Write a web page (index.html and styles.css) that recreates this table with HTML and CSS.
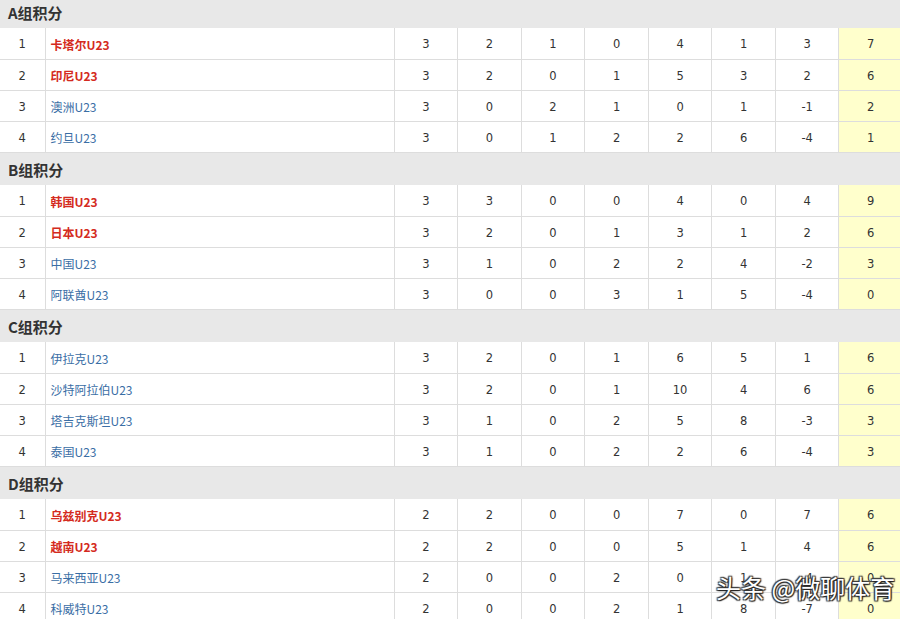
FILE: index.html
```html
<!DOCTYPE html>
<html lang="zh">
<head>
<meta charset="utf-8">
<link rel="stylesheet" href="styles.css">
</head>
<body>
<div class="page">
  <section class="group first">
    <div class="group-title">A组积分</div>
    <table class="standings">
      <colgroup><col class="c-rank"><col class="c-team"><col class="c-n"><col class="c-n"><col class="c-n"><col class="c-n"><col class="c-n"><col class="c-n"><col class="c-n"><col class="c-pts"></colgroup>
      <tr><td>1</td><td class="team top">卡塔尔U23</td><td>3</td><td>2</td><td>1</td><td>0</td><td>4</td><td>1</td><td>3</td><td class="pts">7</td></tr>
      <tr><td>2</td><td class="team top">印尼U23</td><td>3</td><td>2</td><td>0</td><td>1</td><td>5</td><td>3</td><td>2</td><td class="pts">6</td></tr>
      <tr><td>3</td><td class="team">澳洲U23</td><td>3</td><td>0</td><td>2</td><td>1</td><td>0</td><td>1</td><td>-1</td><td class="pts">2</td></tr>
      <tr><td>4</td><td class="team">约旦U23</td><td>3</td><td>0</td><td>1</td><td>2</td><td>2</td><td>6</td><td>-4</td><td class="pts">1</td></tr>
    </table>
  </section>
  <section class="group">
    <div class="group-title">B组积分</div>
    <table class="standings">
      <colgroup><col class="c-rank"><col class="c-team"><col class="c-n"><col class="c-n"><col class="c-n"><col class="c-n"><col class="c-n"><col class="c-n"><col class="c-n"><col class="c-pts"></colgroup>
      <tr><td>1</td><td class="team top">韩国U23</td><td>3</td><td>3</td><td>0</td><td>0</td><td>4</td><td>0</td><td>4</td><td class="pts">9</td></tr>
      <tr><td>2</td><td class="team top">日本U23</td><td>3</td><td>2</td><td>0</td><td>1</td><td>3</td><td>1</td><td>2</td><td class="pts">6</td></tr>
      <tr><td>3</td><td class="team">中国U23</td><td>3</td><td>1</td><td>0</td><td>2</td><td>2</td><td>4</td><td>-2</td><td class="pts">3</td></tr>
      <tr><td>4</td><td class="team">阿联酋U23</td><td>3</td><td>0</td><td>0</td><td>3</td><td>1</td><td>5</td><td>-4</td><td class="pts">0</td></tr>
    </table>
  </section>
  <section class="group">
    <div class="group-title">C组积分</div>
    <table class="standings">
      <colgroup><col class="c-rank"><col class="c-team"><col class="c-n"><col class="c-n"><col class="c-n"><col class="c-n"><col class="c-n"><col class="c-n"><col class="c-n"><col class="c-pts"></colgroup>
      <tr><td>1</td><td class="team">伊拉克U23</td><td>3</td><td>2</td><td>0</td><td>1</td><td>6</td><td>5</td><td>1</td><td class="pts">6</td></tr>
      <tr><td>2</td><td class="team">沙特阿拉伯U23</td><td>3</td><td>2</td><td>0</td><td>1</td><td>10</td><td>4</td><td>6</td><td class="pts">6</td></tr>
      <tr><td>3</td><td class="team">塔吉克斯坦U23</td><td>3</td><td>1</td><td>0</td><td>2</td><td>5</td><td>8</td><td>-3</td><td class="pts">3</td></tr>
      <tr><td>4</td><td class="team">泰国U23</td><td>3</td><td>1</td><td>0</td><td>2</td><td>2</td><td>6</td><td>-4</td><td class="pts">3</td></tr>
    </table>
  </section>
  <section class="group">
    <div class="group-title">D组积分</div>
    <table class="standings">
      <colgroup><col class="c-rank"><col class="c-team"><col class="c-n"><col class="c-n"><col class="c-n"><col class="c-n"><col class="c-n"><col class="c-n"><col class="c-n"><col class="c-pts"></colgroup>
      <tr><td>1</td><td class="team top">乌兹别克U23</td><td>2</td><td>2</td><td>0</td><td>0</td><td>7</td><td>0</td><td>7</td><td class="pts">6</td></tr>
      <tr><td>2</td><td class="team top">越南U23</td><td>2</td><td>2</td><td>0</td><td>0</td><td>5</td><td>1</td><td>4</td><td class="pts">6</td></tr>
      <tr><td>3</td><td class="team">马来西亚U23</td><td>2</td><td>0</td><td>0</td><td>2</td><td>0</td><td>1</td><td>-4</td><td class="pts">0</td></tr>
      <tr><td>4</td><td class="team">科威特U23</td><td>2</td><td>0</td><td>0</td><td>2</td><td>1</td><td>8</td><td>-7</td><td class="pts">0</td></tr>
    </table>
  </section>
</div>
<div class="watermark">头条 @微聊体育</div>
</body>
</html>
```
FILE: styles.css
```css
html, body {
  margin: 0;
  padding: 0;
  background: #ffffff;
  overflow: hidden;
}
body {
  width: 900px;
  height: 619px;
  position: relative;
  font-family: "DejaVu Sans", "Noto Sans CJK SC", sans-serif;
  color: #333333;
}
.page {
  width: 902px;
}
.group.first {
  margin-top: -5px;
}
.group-title {
  height: 33px;
  box-sizing: border-box;
  padding-left: 8px;
  display: flex;
  align-items: center;
  background: #e8e8e8;
  font-family: "Noto Sans CJK SC", sans-serif;
  font-weight: bold;
  font-size: 15px;
  color: #333333;
  border-top: 1px solid #dddddd;
}
.standings {
  width: 902px;
  table-layout: fixed;
  border-collapse: collapse;
}
.c-rank { width: 45px; }
.c-team { width: 349px; }
.c-n { width: 63.5px; }
.c-pts { width: 63px; }
.standings td {
  height: 31px;
  padding: 2px 0 0;
  box-sizing: border-box;
  border-bottom: 1px solid #dddddd;
  border-left: 1px solid #dddddd;
  text-align: center;
  font-size: 11.5px;
  color: #333333;
}
.standings td:first-child {
  border-left: none;
}
.standings tr:last-child td {
  border-bottom: none;
}
.standings td.team {
  text-align: left;
  padding-left: 5px;
  font-family: "Noto Sans CJK SC", sans-serif;
  font-size: 12px;
  color: #3a6ea5;
}
.standings td.team.top {
  color: #d42a20;
  font-weight: bold;
}
.standings td.pts {
  background: #ffffcc;
}
.watermark {
  position: absolute;
  left: 716px;
  top: 572px;
  font-family: "Noto Sans CJK SC", sans-serif;
  font-size: 25px;
  color: #ffffff;
  text-shadow: 0 0 2px #222, 1px 1px 1px #222, -1px -1px 1px #444, 1px -1px 1px #444, -1px 1px 1px #444;
  white-space: nowrap;
  line-height: 30px;
}
```
